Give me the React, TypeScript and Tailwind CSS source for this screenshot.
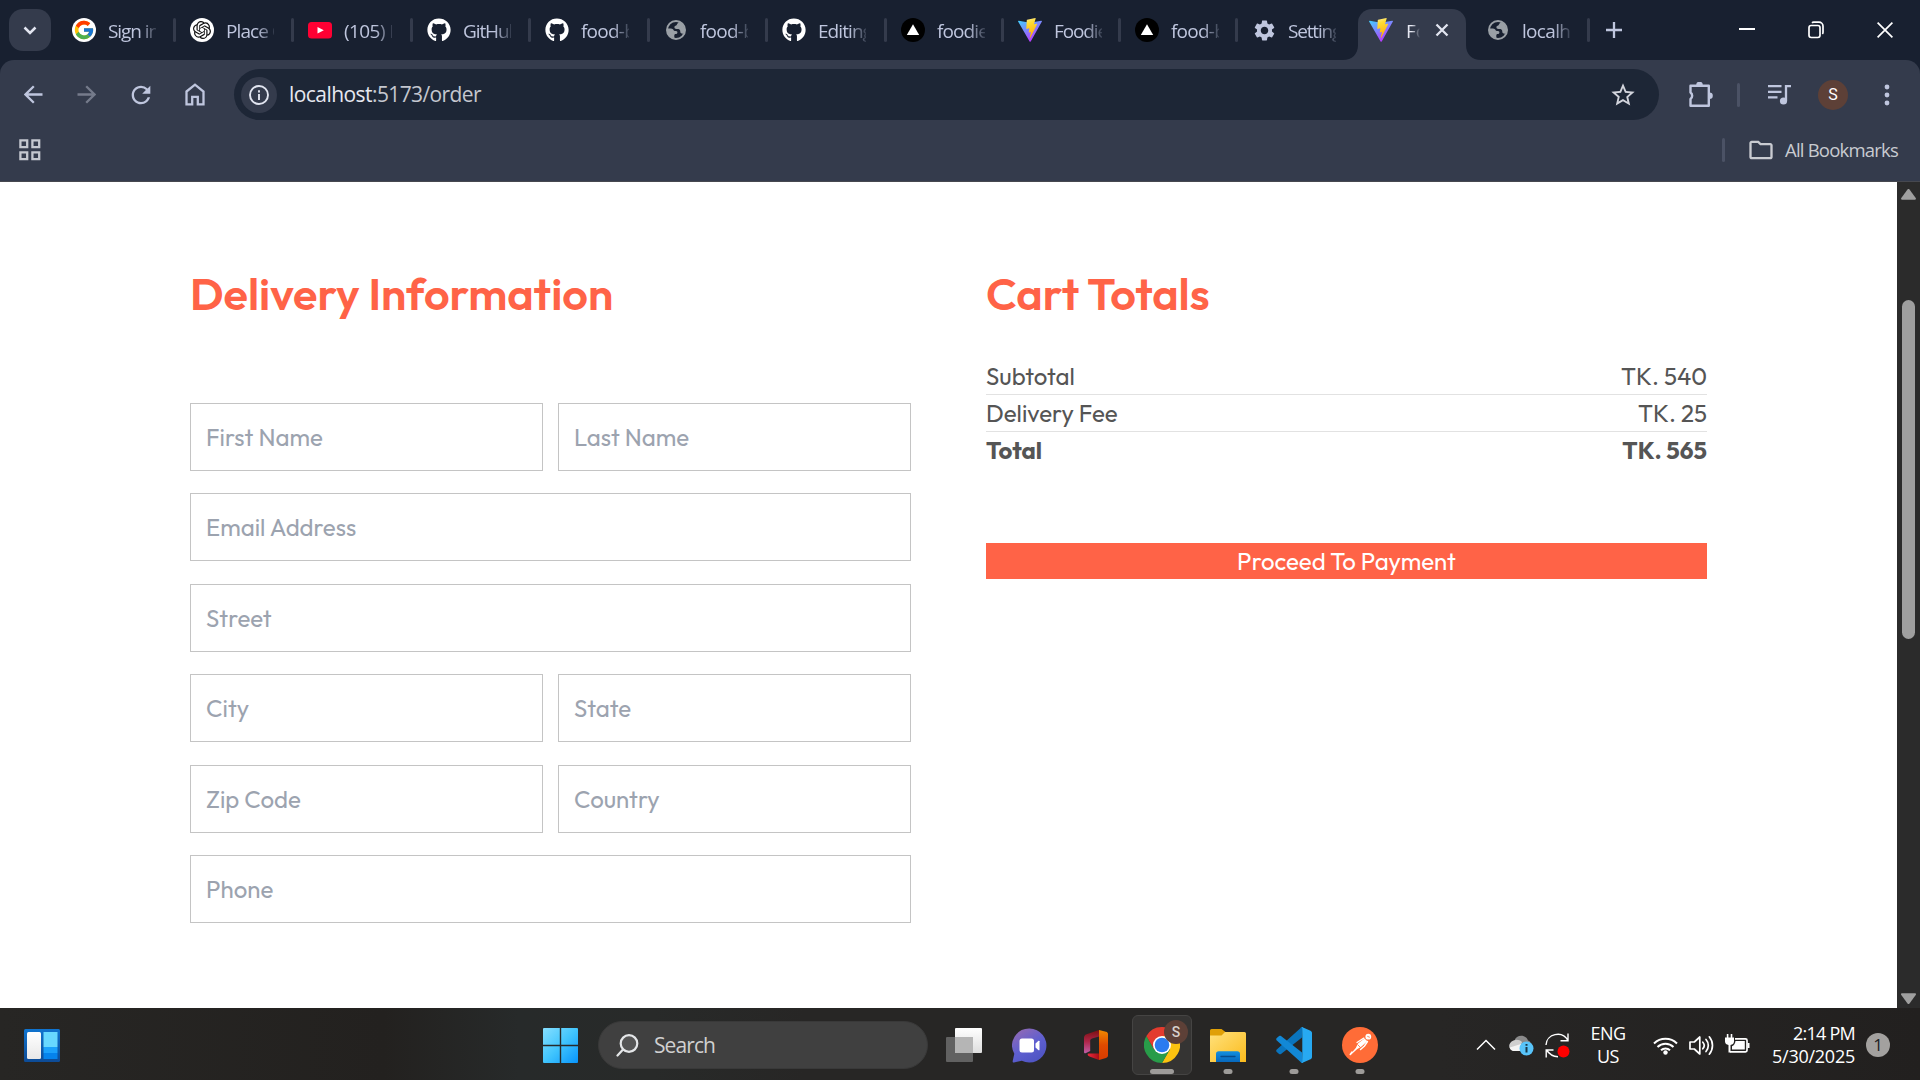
import { useLayoutEffect, useRef, useState, type ReactNode } from "react";
import { FcGoogle } from "react-icons/fc";
import { FaGithub } from "react-icons/fa";
import { SiOpenai } from "react-icons/si";
import { MdRefresh, MdStarBorder, MdOutlineFolder, MdSettings } from "react-icons/md";

const outfit = "font-['Outfit','Lato',sans-serif]";
const segoe = "font-['Segoe_UI','Open_Sans',sans-serif]";

/** Text whose letter spacing is adjusted so that it fills the given width. */
function Fit({ w, children, className = "" }: { w: number; children: string; className?: string }) {
  const ref = useRef<HTMLSpanElement>(null);
  const [gap, setGap] = useState(0);
  useLayoutEffect(() => {
    if (ref.current) setGap((w - ref.current.getBoundingClientRect().width) / children.length);
  }, []);
  return (
    <span ref={ref} className={`inline-block whitespace-nowrap ${className}`} style={{ letterSpacing: gap }}>
      {children}
    </span>
  );
}

const ViteLogo = () => (
  <svg width="24" height="24" viewBox="0 0 24 24">
    <defs>
      <linearGradient id="va" x1="0" y1="0" x2="0.6" y2="1">
        <stop offset="0" stopColor="#41D1FF" />
        <stop offset="1" stopColor="#BD34FE" />
      </linearGradient>
      <linearGradient id="vb" x1="0.4" y1="0" x2="0.6" y2="1">
        <stop offset="0" stopColor="#FFEA83" />
        <stop offset="0.2" stopColor="#FFDD35" />
        <stop offset="1" stopColor="#FFA800" />
      </linearGradient>
    </defs>
    <path d="M23.9 3.6 12.7 23.5c-.3.4-.9.4-1.1 0L.1 3.6c-.3-.5.1-1 .7-.9L12 4.7l11.2-2c.6-.1 1 .4.7.9z" fill="url(#va)" />
    <path d="m17.3.1-8.2 1.6a.4.4 0 0 0-.3.3l-.5 8.5c0 .2.2.4.4.4l2.3-.6c.2 0 .4.2.4.4l-.7 3.4c0 .2.2.4.4.3l1.4-.4c.2-.1.4.1.4.3l-1.1 5.2c-.1.3.4.5.5.2l.1-.2 6.7-13.3c.1-.2-.1-.5-.4-.4l-2.4.5c-.2 0-.4-.2-.3-.4L17.700.6c0-.3-.2-.5-.4-.5z" fill="url(#vb)" />
  </svg>
);

const Globe = () => (
  <svg width="26" height="26" viewBox="0 0 24 24">
    <circle cx="12" cy="12" r="9" fill="#182030" stroke="#9aa0a6" strokeWidth="2" />
    <path d="M11 20.500c-4.500-.5-7.500-3.900-7.500-8.500 0-.6.1-1 .2-1.500H7c1.200 0 2.200.8 2.700 1.800.5.900 1.300.700 2.300.700 1 0 1.500.8 1.400 1.700-.1.900-.9 1.300-1.700 1.300-1 0-1.400.6-1.400 1.500v1.500c0 .6.300 1 .7 1.500zM14.500 3.800c3.500 1.200 6 4.300 6 8.200 0 1.200-.3 2.300-.7 3.300-.8.500-1.900.500-2.700 0-.9-.6-.8-1.700-.9-2.600-.2-1.200-1.300-1.700-2.500-1.700-1.600 0-3.300-.2-3.300-1.600 0-1.200 1-1.400 1.800-1.800.9-.4.700-1.400 1.300-2 .5-.5 1.200-.8 1-1.800z" fill="#9aa0a6" />
  </svg>
);

const Vercel = () => (
  <svg width="24" height="24" viewBox="0 0 24 24">
    <circle cx="12" cy="12" r="12" fill="#000" />
    <path d="M12 6.300 18.200 17H5.800z" fill="#fff" />
  </svg>
);

const YouTube = () => (
  <svg width="24" height="24" viewBox="0 0 24 24">
    <rect y="4" width="24" height="16.500" rx="3.500" fill="#ff0033" />
    <path d="m9.500 9 6.300 3.300-6.300 3.300z" fill="#fff" />
  </svg>
);

const Google = () => (
  <span className="flex size-6 items-center justify-center rounded-full bg-white">
    <FcGoogle size={22} />
  </span>
);
const OpenAI = () => (
  <span className="flex size-6 items-center justify-center rounded-full bg-white">
    <SiOpenai size={18} color="#111" />
  </span>
);
const Github = () => <FaGithub size={24} color="#fff" className="shrink-0" />;
const Gear = () => <MdSettings size={25} color="#bfc6de" className="shrink-0" />;

const tabs: { icon: ReactNode; title: string; w: string; tw: number; sep: boolean }[] = [
  { icon: <Google />, title: "Sign in", w: "w-[118px]", tw: 51, sep: true },
  { icon: <OpenAI />, title: "Place O", w: "w-[118px]", tw: 60, sep: true },
  { icon: <YouTube />, title: "(105) N", w: "w-[119px]", tw: 59, sep: true },
  { icon: <Github />, title: "GitHub", w: "w-[118px]", tw: 56, sep: true },
  { icon: <Github />, title: "food-b", w: "w-[119px]", tw: 54, sep: true },
  { icon: <Globe />, title: "food-b", w: "w-[118px]", tw: 54, sep: true },
  { icon: <Github />, title: "Editing", w: "w-[119px]", tw: 54, sep: true },
  { icon: <Vercel />, title: "foodie", w: "w-[117px]", tw: 51, sep: true },
  { icon: <ViteLogo />, title: "Foodie", w: "w-[117px]", tw: 53, sep: true },
  { icon: <Vercel />, title: "food-b", w: "w-[117px]", tw: 54, sep: true },
  { icon: <Gear />, title: "Settings", w: "w-[117px]", tw: 61, sep: false },
];

function Tab({ icon, title, w, tw, sep }: (typeof tabs)[number]) {
  return (
    <div className={`flex h-6 shrink-0 items-center ${w}`}>
      <div className="ml-3.5 flex size-6 shrink-0 items-center justify-center">{icon}</div>
      <div className="ml-3 w-12 shrink-0 overflow-hidden pt-[2px] [mask-image:linear-gradient(90deg,#000_65%,transparent_108%)]">
        <Fit w={tw} className="text-[19px] leading-7">{title}</Fit>
      </div>
      {sep && <div className="ml-auto h-6 w-[3px] rounded-full bg-[#343b4c]" />}
    </div>
  );
}

function TabStrip() {
  return (
    <div className={`flex h-[60px] items-center bg-[#182030] text-[#bfc6de] ${segoe}`}>
      <div className="mr-[7px] ml-[9px] flex size-[42px] shrink-0 items-center justify-center rounded-[14px] bg-[#343b4c]">
        <svg width="14" height="9" viewBox="0 0 14 9" fill="none" stroke="#e2e5f0" strokeWidth="2.500">
          <path d="m1.500 1.500 5.500 5.500 5.500-5.500" />
        </svg>
      </div>
      {tabs.map((t, i) => (
        <Tab key={i} {...t} />
      ))}
      <div className="relative ml-[3px] flex h-[51px] w-[108px] shrink-0 items-center self-end rounded-t-[14px] bg-[#343b4c] pb-[9px]">
        <svg className="absolute bottom-0 -left-[15px]" width="15" height="15"><path d="M15 0v15H0C9 15 15 9 15 0z" fill="#343b4c" /></svg>
        <svg className="absolute -right-[15px] bottom-0" width="15" height="15"><path d="M0 0v15h15C6 15 0 9 0 0z" fill="#343b4c" /></svg>
        <div className="ml-[11px]"><ViteLogo /></div>
        <div className="ml-[13px] w-3.5 overflow-hidden pt-[2px] text-[19px] leading-7 text-[#e6e8f2] [mask-image:linear-gradient(90deg,#000_40%,transparent)]">Fo</div>
        <svg className="ml-[15px]" width="14" height="14" viewBox="0 0 14 14" stroke="#e2e5f0" strokeWidth="2.300">
          <path d="m1.500 1.500 11 11m0-11-11 11" />
        </svg>
      </div>
      <div className="ml-[6px] flex"><Tab icon={<Globe />} title="localho" w="w-[118px]" tw={59} sep /></div>
      <svg className="ml-4" width="16" height="16" viewBox="0 0 16 16" stroke="#bfc6de" strokeWidth="2.300">
        <path d="M8 0v16M0 8h16" />
      </svg>
      <div className="ml-auto flex items-center">
        <svg width="16" height="16" viewBox="0 0 16 16" stroke="#fff" strokeWidth="2"><path d="M0 7h16" /></svg>
        <svg className="ml-[53px]" width="16" height="18" viewBox="0 0 16 18" fill="none" stroke="#fff" strokeWidth="1.700">
          <rect x="1" y="4.500" width="11" height="12" rx="2.200" />
          <path d="M4 1.800c.5-.5 1-.7 1.700-.7H11A4 4 0 0 1 15 5v6.300c0 .7-.1 1.200-.6 1.700" />
        </svg>
        <svg className="mr-[27px] ml-[53px]" width="16" height="16" viewBox="0 0 16 16" stroke="#fff" strokeWidth="1.700"><path d="m.600.600 14.800 14.800m0-14.800L.600 15.400" /></svg>
      </div>
    </div>
  );
}

function Toolbar() {
  return (
    <div className={`bg-[#182030] ${segoe}`}>
      <div className="flex h-[122px] flex-col rounded-t-[14px] border-b border-[#46484f] bg-[#343b4c] pt-[9px] text-[#bfc6de]">
        <div className="flex h-[51px] shrink-0 items-center">
          <svg className="ml-6" width="19" height="19" viewBox="0 0 19 19" fill="none" stroke="#bfc6de" strokeWidth="2.300"><path d="M18.500 9.500H1.800M9.800 1.200 1.500 9.500l8.300 8.300" /></svg>
          <svg className="ml-[34px]" width="19" height="19" viewBox="0 0 19 19" fill="none" stroke="#757b8b" strokeWidth="2.300"><path d="M.5 9.500h16.700M9.200 1.200l8.300 8.300-8.300 8.300" /></svg>
          <MdRefresh className="ml-[31px]" size={28} />
          <svg className="ml-[30px]" width="20" height="23" viewBox="0 0 20 23" fill="none" stroke="#bfc6de" strokeWidth="2.300"><path d="M1.500 8.500 10 1.700l8.500 6.800v12.800h-5.700v-7.500H7.200v7.500H1.500z" /></svg>
          <div className="ml-[29px] flex h-[51px] w-[1425px] shrink-0 items-center rounded-full bg-[#1d2636]">
            <div className="ml-[7px] flex size-9 items-center justify-center rounded-full bg-[#343b4c]">
              <svg width="20" height="20" viewBox="0 0 20 20" fill="none" stroke="#e2e5f0" strokeWidth="1.900"><circle cx="10" cy="10" r="9" /><path d="M10 9v6M10 5.200v2.200" /></svg>
            </div>
            <div className="ml-[12px] flex text-[21px] leading-[51px]">
              <Fit w={83} className="text-[#e6e8f0]">localhost</Fit>
              <Fit w={109} className="text-[#c4c7cf]">:5173/order</Fit>
            </div>
            <MdStarBorder className="mr-[22px] ml-auto" size={28} color="#d2d4dc" />
          </div>
          <svg className="ml-[29px]" width="26" height="26" viewBox="0 0 26 26" fill="none" stroke="#bfc6de" strokeWidth="2.400" strokeLinejoin="round">
            <path d="M2.500 3.800h18.300v19.900H2.500v-6.700a4 4 0 0 0 0-6.500z" />
            <path d="M8.200 3a3.300 3.300 0 0 1 6.600 0zM21.500 10.500a3.300 3.300 0 0 1 0 6.600z" fill="#bfc6de" stroke="none" />
          </svg>
          <div className="ml-[23px] h-6 w-[3px] rounded-full bg-[#4b5265]" />
          <svg className="ml-7" width="23" height="22" viewBox="0 0 23 22" fill="none" stroke="#bfc6de" strokeWidth="2.300">
            <path d="M0 2.200h13.500M0 7.800h13.500M0 13.300h9.500M18 17V2.200h5" /><circle cx="15.500" cy="17" r="3.600" fill="#bfc6de" stroke="none" />
          </svg>
          <div className="ml-[27px] flex size-[30px] items-center justify-center rounded-full bg-[#5d4037] font-['Roboto',sans-serif] text-[16px] text-white">S</div>
          <svg className="ml-9" width="6" height="22" viewBox="0 0 6 22" fill="#bfc6de"><circle cx="3" cy="3" r="2.400" /><circle cx="3" cy="11" r="2.400" /><circle cx="3" cy="19" r="2.400" /></svg>
        </div>
        <div className="flex h-[60px] items-center">
          <svg className="ml-[19px]" width="22" height="22" viewBox="0 0 22 22" fill="none" stroke="#c4c7cf" strokeWidth="2.300">
            <path d="M1.400 1.400h6.800v6.800H1.400zM13.400 1.400h6.800v6.800h-6.800zM1.400 13.400h6.800v6.800H1.400zM13.400 13.400h6.800v6.800h-6.800z" />
          </svg>
          <div className="ml-auto h-6 w-[3px] rounded-full bg-[#4b5265]" />
          <MdOutlineFolder className="ml-[22px]" size={28} color="#c9cbd1" />
          <Fit w={113} className="mr-[22px] mb-px ml-[10px] text-[18.5px] text-[#c9cbd1]">All Bookmarks</Fit>
        </div>
      </div>
    </div>
  );
}

function Field({ label }: { label: string }) {
  return (
    <div className="flex h-[68px] flex-1 items-center border border-[#c4c4c4] pl-[15px] text-[24px] text-[#9ca3af]">
      {label}
    </div>
  );
}

const rows: string[][] = [
  ["First Name", "Last Name"],
  ["Email Address"],
  ["Street"],
  ["City", "State"],
  ["Zip Code", "Country"],
  ["Phone"],
];

function Line({ a, b, className = "" }: { a: string; b: string; className?: string }) {
  return (
    <div className={`flex h-9 items-center justify-between ${className}`}>
      <span>{a}</span>
      <span>{b}</span>
    </div>
  );
}

function Page() {
  return (
    <div className="flex h-[826px] bg-white">
      <main className={`flex flex-1 items-start pl-[190px] ${outfit}`}>
        <section className="w-[721px]">
          <h1 className="mt-[76px] h-[72px] text-[45px] leading-[72px] font-semibold text-[#ff6347]">
            Delivery Information
          </h1>
          <div className="mt-[73px] flex flex-col gap-[22.4px]">
            {rows.map((r, i) => (
              <div key={i} className="flex gap-[15px]">
                {r.map((label) => (
                  <Field key={label} label={label} />
                ))}
              </div>
            ))}
          </div>
        </section>
        <section className="ml-[75px] w-[721px] text-[24px] text-[#555]">
          <h2 className="mt-[76px] h-[72px] text-[45px] leading-[72px] font-semibold text-[#ff6347]">
            Cart Totals
          </h2>
          <div className="mt-[28px]">
            <Line a="Subtotal" b="TK. 540" />
            <hr className="h-px border-0 bg-[#e2e2e2]" />
            <Line a="Delivery Fee" b="TK. 25" />
            <hr className="h-px border-0 bg-[#e2e2e2]" />
            <Line a="Total" b="TK. 565" className="font-bold" />
          </div>
          <div className="mt-[75px] flex h-9 items-center justify-center bg-[#ff6347] text-white">
            Proceed To Payment
          </div>
        </section>
      </main>
      <div className="flex w-[23px] flex-col items-center bg-[#2b2b2b]">
        <svg className="mt-[7px]" width="15" height="11" viewBox="0 0 15 11" fill="#9f9f9f"><path d="M6.300.700a1.500 1.500 0 0 1 2.400 0l6 8.300c.6.900.2 1.700-.9 1.700H1.200C.1 10.700-.3 9.900.3 9z" /></svg>
        <div className="mt-[100px] h-[339px] w-[13px] rounded-full bg-[#9f9f9f]" />
        <svg className="mt-auto mb-[4px] rotate-180" width="15" height="11" viewBox="0 0 15 11" fill="#9f9f9f"><path d="M6.300.700a1.500 1.500 0 0 1 2.400 0l6 8.300c.6.900.2 1.700-.9 1.700H1.200C.1 10.700-.3 9.900.3 9z" /></svg>
      </div>
    </div>
  );
}

function AppSlot({ children, active }: { children: ReactNode; active?: boolean }) {
  return (
    <div className={`relative flex h-[60px] w-[60px] shrink-0 items-center justify-center rounded-[6px] ${active ? "border border-[#454443] bg-[#353433]" : ""}`}>
      {children}
      <div className={`absolute left-1/2 h-[5px] -translate-x-1/2 rounded-full bg-[#9d9b99] ${active ? "bottom-0 w-6" : "bottom-px w-[9px]"}`} />
    </div>
  );
}

function Taskbar() {
  return (
    <div className={`flex h-[72px] items-center bg-[linear-gradient(90deg,#272624,#23211f_20%,#272a2a_27%,#282a29_34%,#272625_42%,#272625_75%,#22201f)] pt-[2px] ${segoe}`}>
      <svg className="ml-6 shrink-0" width="36" height="33" viewBox="0 0 36 33">
        <defs>
          <linearGradient id="wa" x2="0" y2="1"><stop stopColor="#1074cf" /><stop offset="1" stopColor="#0d4b96" /></linearGradient>
          <linearGradient id="wb" x2="0" y2="1"><stop stopColor="#fff" /><stop offset="1" stopColor="#e8e8e8" /></linearGradient>
        </defs>
        <rect width="36" height="33" rx="1.500" fill="url(#wa)" />
        <rect x="3" y="3" width="14" height="27" rx="1.500" fill="url(#wb)" />
        <path d="M19.500 3h14v15h-14z" fill="#68d8ff" />
        <path d="M19.500 18h14v6h-14z" fill="#1ba1fb" />
        <path d="M19.500 24h14v6h-14z" fill="#0583ec" />
      </svg>
      <svg className="ml-[483px] shrink-0" width="35" height="35" viewBox="0 0 35 35">
        <defs>
          <linearGradient id="sa" x2="1" y2="1"><stop stopColor="#86dfff" /><stop offset=".5" stopColor="#41c5fd" /><stop offset="1" stopColor="#0794fb" /></linearGradient>
        </defs>
        <path d="M1 0h15.800v16.800H0V1a1 1 0 0 1 1-1zM18.200 0H34a1 1 0 0 1 1 1v15.800H18.200zM0 18.200h16.800V35H1a1 1 0 0 1-1-1zM18.200 18.200H35V34a1 1 0 0 1-1 1H18.200z" fill="url(#sa)" />
      </svg>
      <div className="ml-5 flex h-12 w-[330px] shrink-0 items-center rounded-full border border-[#393939] bg-[#404040]">
        <svg className="ml-[17px]" width="23" height="23" viewBox="0 0 23 23" fill="none" stroke="#e4e6e8" strokeWidth="2.200" strokeLinecap="round">
          <circle cx="13" cy="9.500" r="8.300" fill="#555" /><path d="m7 15.500-5.500 6" />
        </svg>
        <Fit w={61} className="mt-px ml-[15px] text-[21px] text-[#d0d0d0]">Search</Fit>
      </div>
      <svg className="ml-[18px] shrink-0" width="36" height="34" viewBox="0 0 36 34">
        <defs><linearGradient id="ta" x2="0" y2="1"><stop stopColor="#fff" /><stop offset="1" stopColor="#dedede" /></linearGradient></defs>
        <rect x="9" width="27" height="25" rx="1" fill="url(#ta)" />
        <rect y="9" width="27" height="25" rx="1" fill="#616161" />
        <path d="M9 9h18v16H9z" fill="#b5b5b5" />
      </svg>
      <svg className="ml-[30px] shrink-0" width="35" height="35" viewBox="0 0 35 35">
        <defs><linearGradient id="ca" x1="0" x2=".6" y2="1"><stop stopColor="#9a6bb0" /><stop offset=".6" stopColor="#5e5fd0" /><stop offset="1" stopColor="#5055c4" /></linearGradient></defs>
        <path d="M17.500.500a17 17 0 1 1-7.700 32.200L2 34.400c-1 .2-1.500-.5-1.300-1.400l1.600-7.200A17 17 0 0 1 17.500.500z" fill="url(#ca)" />
        <rect x="7.500" y="10.500" width="14.500" height="14" rx="2.500" fill="#fff" />
        <path d="m23.500 15.500 3-2.700c.5-.3 1 0 1 .5v8.400c0 .5-.5.800-1 .5l-3-2.700z" fill="#fff" />
      </svg>
      <svg className="ml-[37px] shrink-0" width="24" height="30" viewBox="0 0 24 30">
        <defs>
          <linearGradient id="oa" x2="0" y2="1"><stop stopColor="#7a1010" /><stop offset=".5" stopColor="#b0264a" /><stop offset="1" stopColor="#c05fa8" /></linearGradient>
          <linearGradient id="ob" x2="0" y2="1"><stop stopColor="#f08a00" /><stop offset=".5" stopColor="#e04a00" /><stop offset="1" stopColor="#d83b01" /></linearGradient>
          <linearGradient id="oc" x2="1" y2="0"><stop stopColor="#ee2a3c" /><stop offset="1" stopColor="#a50e18" /></linearGradient>
        </defs>
        <path d="M15 0v6.500L8 8.500c-1.200.4-1.800 1.200-1.800 2.500v10L1.500 23.200C.7 23.500 0 23 0 22V7.800C0 6 .8 4.900 2.500 4.200z" fill="url(#oa)" />
        <path d="M15 0l7 1.800c1.300.3 2 1.200 2 2.500v21.200c0 1.200-.7 2.100-2 2.500L15 30z" fill="url(#ob)" />
        <path d="M4.500 23.500H15V30L5.500 26.500C3.500 25.600 3 23.700 4.500 23.500z" fill="url(#oc)" />
      </svg>
      <div className="ml-6 flex gap-1.5">
        <AppSlot active>
          <svg width="36" height="36" viewBox="0 0 36 36">
            <path d="M18 9h15.590A18 18 0 0 1 18 36l7.800-13.500z" fill="#fcc310" />
            <path d="M2.410 9A18 18 0 0 0 18 36l7.800-13.500H10.200z" fill="#289c49" />
            <path d="M2.410 9A18 18 0 0 1 33.590 9H18l-7.800 13.500z" fill="#e33b2e" />
            <circle cx="18" cy="18" r="9" fill="#fff" /><circle cx="18" cy="18" r="7.300" fill="#2a7bf0" />
          </svg>
          <div className="absolute top-[4px] right-[3px] flex size-6 items-center justify-center rounded-full bg-[#5d4037] font-['Roboto',sans-serif] text-[14px] font-medium text-[#d8d0cd]">S</div>
        </AppSlot>
        <AppSlot>
          <svg width="36" height="33" viewBox="0 0 36 33">
            <defs>
              <linearGradient id="fa" x2="1" y2="1"><stop stopColor="#ffe17c" /><stop offset="1" stopColor="#fbbb1c" /></linearGradient>
              <linearGradient id="fb" x2="0" y2="1"><stop stopColor="#1390e0" /><stop offset="1" stopColor="#0768bd" /></linearGradient>
            </defs>
            <path d="M0 1.500A1.500 1.500 0 0 1 1.500 0h10l4 3v6H0z" fill="#e0a007" />
            <path d="M0 6.500h11.500L15 3h19.500A1.500 1.500 0 0 1 36 4.500V33H0z" fill="url(#fa)" />
            <path d="M6 33v-8a2.800 2.800 0 0 1 2.800-2.800h18.400A2.800 2.800 0 0 1 30 25v8z" fill="url(#fb)" />
            <path d="M11 27.500h14" stroke="#084b8a" strokeWidth="1.300" strokeLinecap="round" />
          </svg>
        </AppSlot>
        <AppSlot>
          <svg width="36" height="36" viewBox="0 0 36 36">
            <path d="M27 0 26 10.500 5 27c-.6.400-1.300.400-1.900 0L.8 25c-.8-.7-.8-1.800 0-2.500L25.200.600c.5-.5 1.200-.7 1.800-.6z" fill="#0a74bd" />
            <path d="M27 36 26 25.500 5 9c-.6-.4-1.300-.4-1.900 0L.8 11c-.8.700-.8 1.800 0 2.500l24.400 21.900c.5.500 1.200.7 1.800.6z" fill="#1288d6" />
            <path d="M26.500 35.800c-.8.300-1.700.100-2.300-.5.800.8 2.100.200 2.100-.9V1.600c0-1.100-1.300-1.700-2.100-.9.600-.6 1.500-.8 2.300-.5l8 3.500c.9.400 1.500 1.300 1.500 2.300v24c0 1-.6 1.900-1.500 2.300z" fill="#27a9f2" />
          </svg>
        </AppSlot>
        <AppSlot>
          <svg width="36" height="36" viewBox="0 0 36 36">
            <circle cx="18" cy="18" r="18" fill="#ff6c37" />
            <circle cx="26.300" cy="9.700" r="2.900" fill="#fff" />
            <path d="m16 16.500 6.500-5 2.800 2.700-5.800 5.300-4.500 2.700-5.500 5-1.500 1 1.800-2.700 4-4.500z" fill="#fff" />
            <path d="m21.800 11.200-6.800 4.300M25.500 14.500l-3 4.500-4 3.500M10 25l-1.800 2.500" stroke="#fff" strokeWidth="1.400" fill="none" strokeLinecap="round" />
            <path d="m15.500 17.500 2.500 2.500M25.300 9.300l2.500 1" stroke="#ff6c37" strokeWidth=".8" />
          </svg>
        </AppSlot>
      </div>
      <div className="ml-auto flex items-center text-[18px] text-white">
        <svg width="20" height="12" viewBox="0 0 20 12" fill="none" stroke="#fff" strokeWidth="1.500"><path d="m1 10.500 9-9 9 9" /></svg>
        <svg className="ml-[13px]" width="25" height="22" viewBox="0 0 25 22">
          <path d="M5.500 6.500C7 .500 17 0 19 6.500c3 .5 3.500 4 1.500 6l-10-3z" fill="#8a8a8a" />
          <path d="M4.500 6.500c3-1.500 6.500-.5 8.500 1.500l-3 9H4.500C-1 15.500-1.500 9 4.500 6.500z" fill="#cfcfcf" />
          <path d="M4 17c-2-.8-3-2-3.300-3.500L12 10v7z" fill="#f4f4f4" />
          <circle cx="17.500" cy="14.500" r="7" fill="#58c4fa" />
          <path d="M17.500 13v5.500M17.500 10v1.800" stroke="#17384a" strokeWidth="2" />
        </svg>
        <svg className="ml-[11px]" width="25" height="25" viewBox="0 0 25 25" fill="none" stroke="#fff" strokeWidth="1.400">
          <path d="M1 12C1.500 1 17 -3 23 7.500M23 .5v7.200h-7.500M1.200 24.500v-7.500h7.300M1.500 17c3 4.500 6.500 6.500 11.500 6.800" />
          <circle cx="18.500" cy="18.500" r="6" fill="#f00" stroke="none" />
        </svg>
        <div className="ml-[20px] flex w-[36px] flex-col items-center">
          <Fit w={35} className="leading-[23px]">ENG</Fit>
          <Fit w={22} className="leading-[23px]">US</Fit>
        </div>
        <svg className="ml-[27px]" width="25" height="19" viewBox="0 0 25 19" fill="none" stroke="#fff" strokeWidth="2">
          <path d="M1 7.500a16.300 16.300 0 0 1 23 0M4.500 11a11.300 11.300 0 0 1 16 0M8 14.300a6.400 6.400 0 0 1 9 0" /><circle cx="12.500" cy="16.500" r="2.200" fill="#fff" stroke="none" />
        </svg>
        <svg className="ml-[11px]" width="25" height="21" viewBox="0 0 25 21" fill="none" stroke="#fff" strokeWidth="1.700" strokeLinecap="round" strokeLinejoin="round">
          <path d="M1 7h4.300l5.500-5v17l-5.500-5H1zM13.800 7.200a5 5 0 0 1 0 6.600M17 4.500a9 9 0 0 1 0 12M20.300 1.800a13.500 13.500 0 0 1 0 17.400" />
        </svg>
        <svg className="mb-[3px] ml-[11px]" width="25" height="19" viewBox="0 0 25 19">
          <path d="M10 4.800h10.500a1.500 1.500 0 0 1 1.500 1.500v10a1.500 1.500 0 0 1-1.500 1.500H5" fill="none" stroke="#fff" strokeWidth="1.700" />
          <path d="M10.500 7h9.300v8.500H7v-3.200q3-1.300 3.500-5.300zM22.500 9h2v5h-2z" fill="#fff" />
          <path d="M0 3.500h9v4c0 2-1.500 3.200-3.500 3.500v7.500h-2V11C1.500 10.700 0 9.500 0 7.500zM1.800 0h1.600v4H1.800zM5.700 0h1.600v4H5.700z" fill="#fff" />
        </svg>
        <div className="ml-[21px] flex w-[84px] flex-col items-end">
          <Fit w={62} className="leading-[23px]">2:14 PM</Fit>
          <Fit w={83} className="leading-[23px]">5/30/2025</Fit>
        </div>
        <div className="mr-[30px] ml-[11px] flex size-6 items-center justify-center rounded-full bg-[#a3a19f] text-[17px] text-[#1f1f1f]">1</div>
      </div>
    </div>
  );
}

export default function App() {
  return (
    <div className="flex h-[1080px] w-[1920px] flex-col overflow-hidden">
      <TabStrip />
      <Toolbar />
      <Page />
      <Taskbar />
    </div>
  );
}
